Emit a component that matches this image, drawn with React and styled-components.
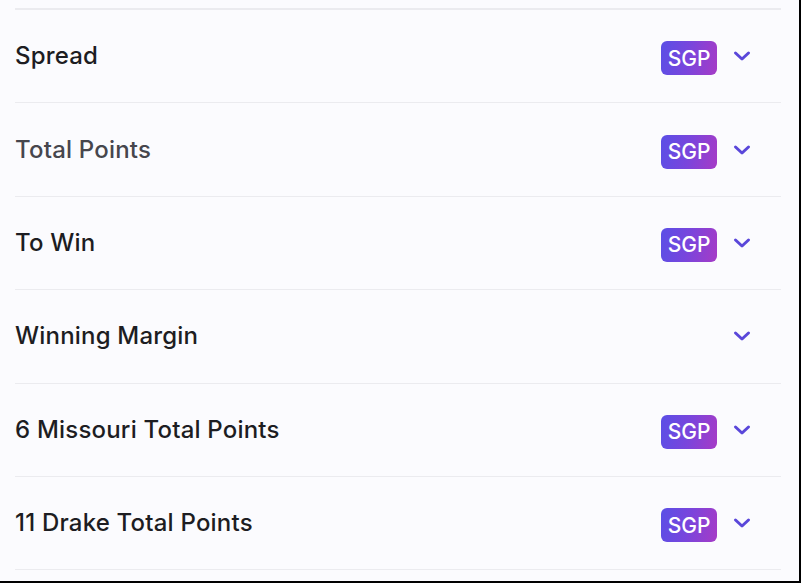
import React from "react";
import styled, { createGlobalStyle } from "styled-components";

const Global = createGlobalStyle`
  html, body { margin: 0; padding: 0; background: #fbfbfe; }
  * { box-sizing: border-box; }
`;

const Frame = styled.div`
  width: 801px;
  height: 583px;
  overflow: hidden;
  background: #fbfbfe;
  border-right: 2px solid #000;
  border-bottom: 2px solid #000;
  font-family: Inter, "Noto Sans", sans-serif;
`;

const List = styled.div`
  display: flex;
  flex-direction: column;
  margin: 0 18px 0 15px;
  padding-top: 8px;
`;

const TopRule = styled.div`
  height: 2px;
  background: #ebebef;
`;

const Row = styled.div`
  height: 93.4px;
  display: flex;
  align-items: center;
  justify-content: space-between;
  border-bottom: 1.5px solid #ebebef;
`;

const Title = styled.div`
  font-size: 24px;
  font-weight: 500;
  letter-spacing: 0.2px;
  color: ${(p) => (p.$muted ? "#46464d" : "#1d1d22")};
  margin-top: -1px;
`;

const Right = styled.div`
  display: flex;
  align-items: center;
  gap: 16px;
  padding-right: 30px;
`;

const Badge = styled.div`
  width: 56px;
  height: 34px;
  border-radius: 6px;
  background: linear-gradient(100deg, #5a4fe6 0%, #7a45dc 50%, #a63bc6 100%);
  color: #fff;
  font-size: 21px;
  font-weight: 500;
  display: flex;
  align-items: center;
  justify-content: center;
  margin-top: 4px;
  visibility: ${(p) => (p.$hidden ? "hidden" : "visible")};
`;

const Chevron = styled.svg`
  width: 18px;
  height: 12px;
  display: block;
`;

const rows = [
  { title: "Spread", sgp: true },
  { title: "Total Points", sgp: true, muted: true },
  { title: "To Win", sgp: true },
  { title: "Winning Margin", sgp: false },
  { title: "6 Missouri Total Points", sgp: true },
  { title: "11 Drake Total Points", sgp: true },
];

export default function App() {
  return (
    <>
      <Global />
      <Frame>
        <List>
          <TopRule />
          {rows.map((r) => (
            <Row key={r.title}>
              <Title $muted={r.muted}>{r.title}</Title>
              <Right>
                <Badge $hidden={!r.sgp}>SGP</Badge>
                <Chevron viewBox="0 0 18 12">
                  <path
                    d="M2.5 3 L9 9 L15.5 3"
                    fill="none"
                    stroke="#5a47da"
                    strokeWidth="3"
                    strokeLinecap="round"
                    strokeLinejoin="round"
                  />
                </Chevron>
              </Right>
            </Row>
          ))}
        </List>
      </Frame>
    </>
  );
}
